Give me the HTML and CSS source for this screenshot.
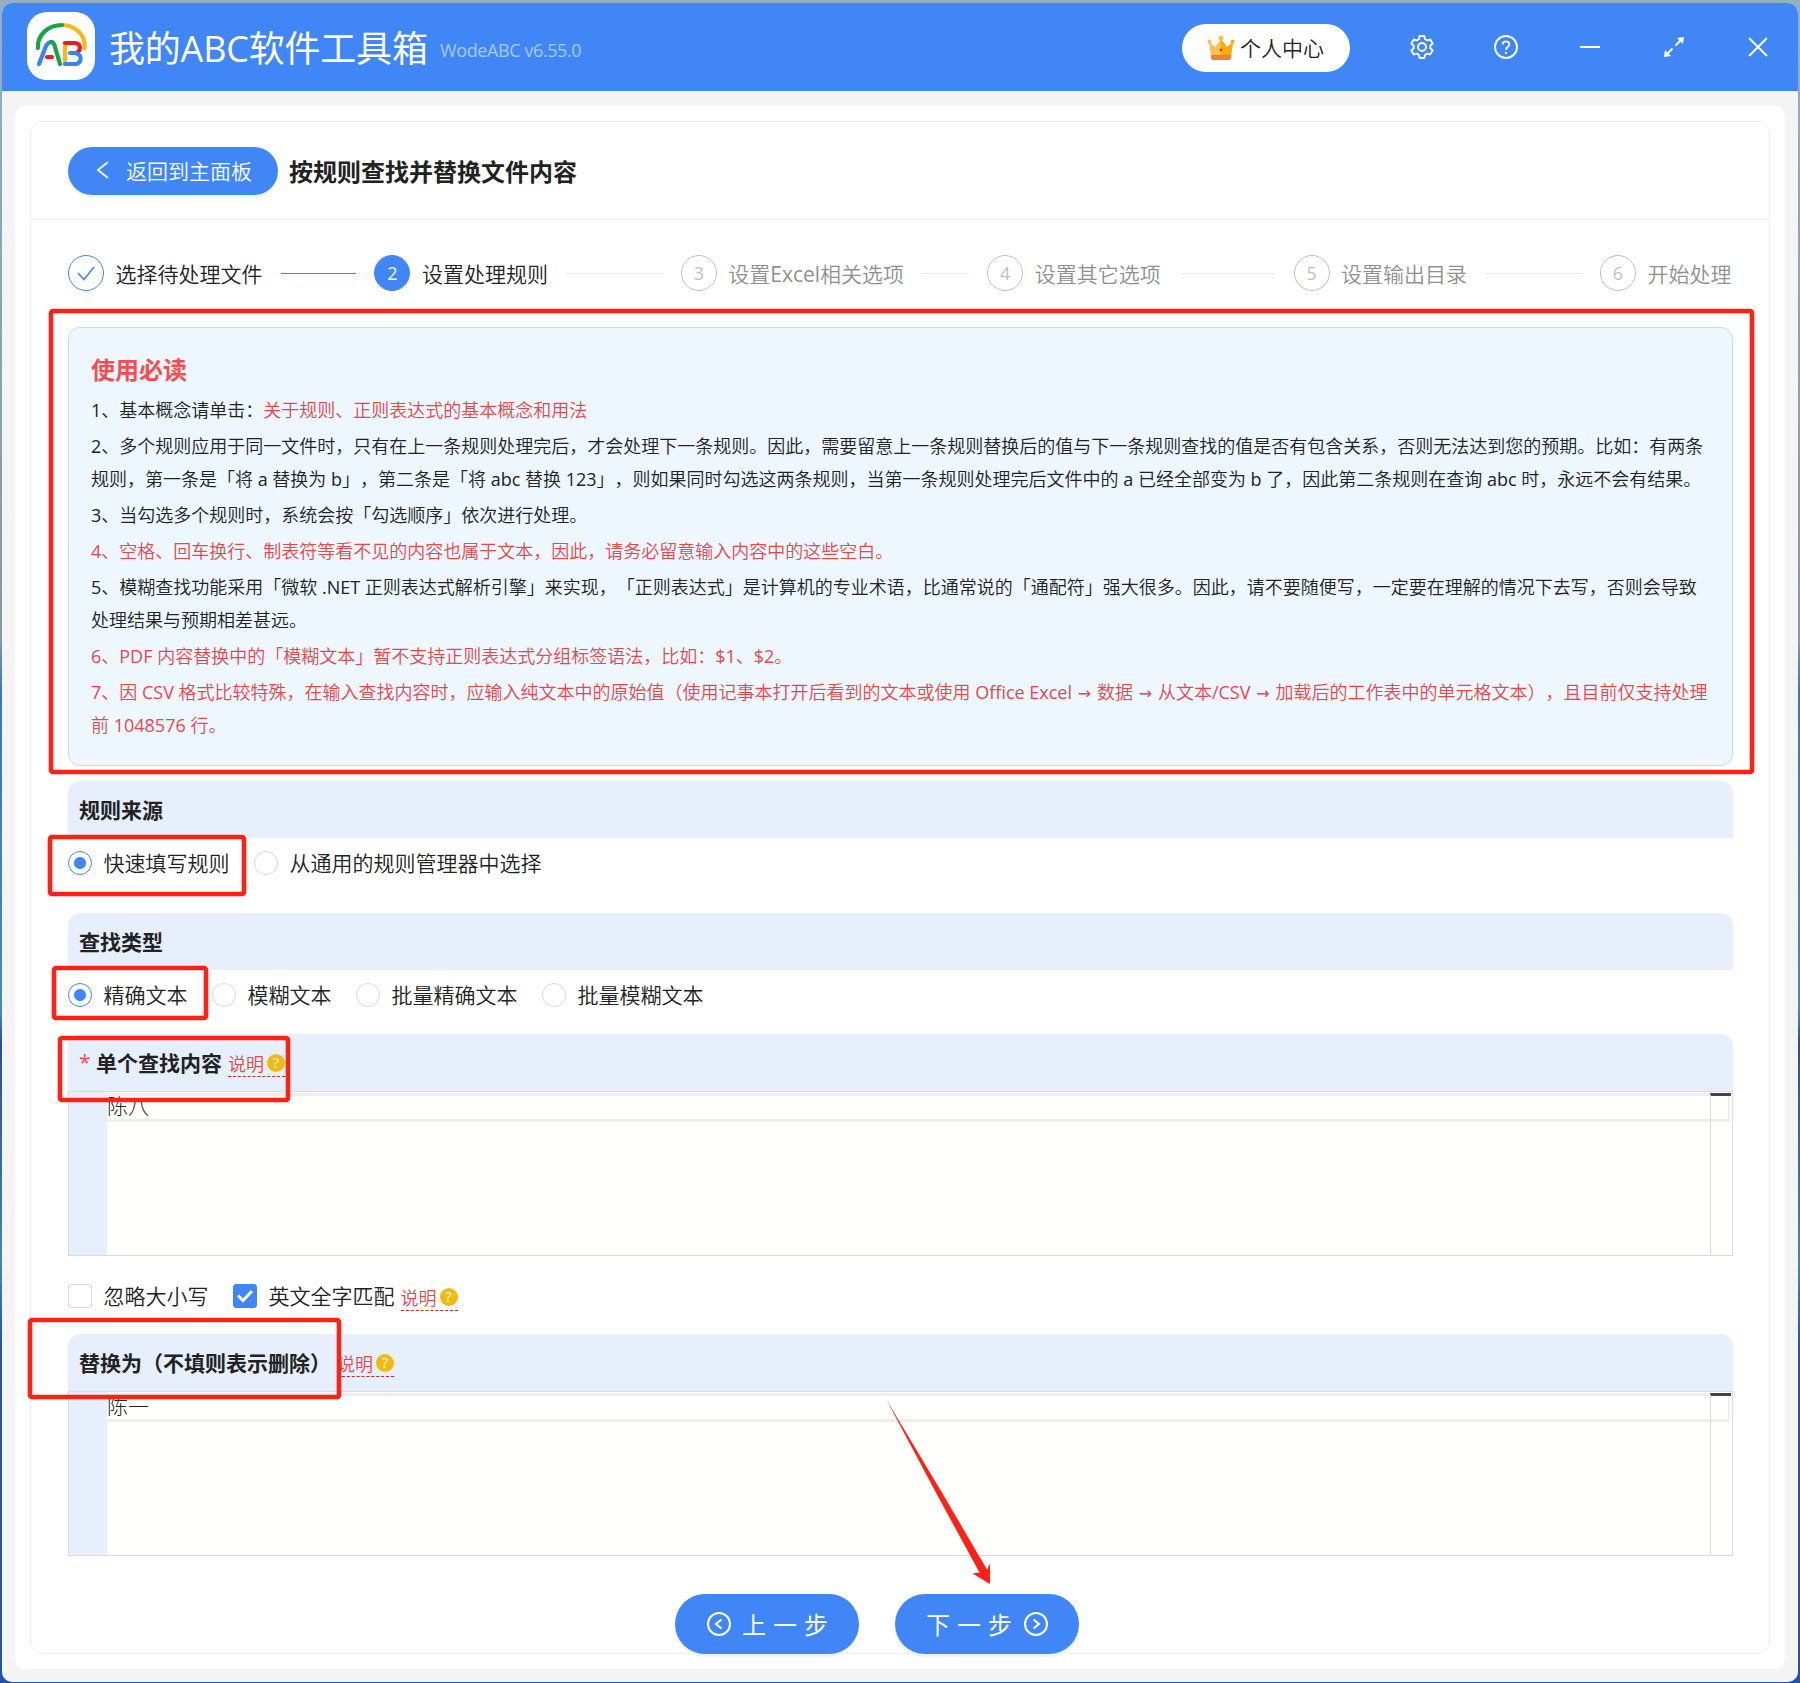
FILE: index.html
```html
<!DOCTYPE html>
<html lang="zh-CN">
<head>
    <meta charset="UTF-8">
    <meta name="viewport" content="width=device-width, initial-scale=1.0">
    <title>我的ABC软件工具箱</title>
    <link rel="stylesheet" href="styles.css">
</head>
<body>
    <div class="window">
        <header class="titlebar">
            <div class="logo">
                <svg width="68" height="68" viewBox="0 0 68 68" fill="none" stroke-width="4.2" stroke-linecap="round">
                    <path d="M57.500 36C59 23 48 13 35 13" stroke="#fbb713"/>
                    <path d="M11 36C10 23 21 13 35 13" stroke="#16a34a"/>
                    <path d="M12 52L19 34Q21 30 25 30" stroke="#3b82f6"/>
                    <path d="M24 30Q27 30 28 35L33 52" stroke="#16a34a"/>
                    <path d="M20 45H25" stroke="#ea1c1c"/>
                    <path d="M38 50V34" stroke="#fbb713"/>
                    <path d="M38 31H48C55 32 54 40 48 41" stroke="#ea1c1c"/>
                    <path d="M43 41H48C56 42 55 52 48 52H38" stroke="#3b82f6"/>
                </svg>
            </div>
            <h1>我的ABC软件工具箱</h1>
            <span class="version">WodeABC v6.55.0</span>
            <div class="window-tools">
                <button class="user-btn">
                    <svg width="28" height="28" viewBox="0 0 28 28">
                        <path d="M2 8L8 13L14 5L20 13L26 8L24 22H4Z" fill="#fcc14d"/>
                        <path d="M14 5L20 13L26 8L24 22H14Z" fill="#fdaa0c"/>
                        <path d="M4 21H24V24Q24 26 22 26H6Q4 26 4 24Z" fill="#ef7f3b"/>
                        <circle cx="14" cy="4" r="2.500" fill="#fcc14d"/>
                        <circle cx="2.500" cy="7.500" r="2" fill="#fcc14d"/>
                        <circle cx="25.500" cy="7.500" r="2" fill="#fdaa0c"/>
                        <circle cx="14" cy="16" r="1.400" fill="#c0401d"/>
                    </svg>
                    <span>个人中心</span>
                </button>
                <svg class="tool" viewBox="0 0 24 24">
                    <path d="M9.700 1H14.300L15.100 4.200L17.200 5.400L20.300 4.500L22.600 8.500L20.300 10.800V13.200L22.600 15.500L20.300 19.500L17.200 18.600L15.100 19.800L14.300 23H9.700L8.900 19.800L6.800 18.600L3.700 19.500L1.400 15.500L3.700 13.200V10.800L1.400 8.500L3.700 4.500L6.800 5.400L8.900 4.200Z"/>
                    <circle cx="12" cy="12" r="4"/>
                </svg>
                <svg class="tool" viewBox="0 0 24 24">
                    <circle cx="12" cy="12" r="11"/>
                    <path d="M8.600 9.500C8.600 5.300 15.400 5.300 15.400 9.400C15.400 11.800 12 11.800 12 14.800"/>
                    <path d="M12 17V19"/>
                </svg>
                <svg class="tool" viewBox="0 0 24 24"><path d="M2 12H22"/></svg>
                <svg class="tool" viewBox="0 0 24 24">
                    <path d="M13.500 10.500L20 4M10.500 13.500L4 20"/>
                    <path class="solid" d="M22 2L21 9L15 3ZM2 22L3 15L9 21Z"/>
                </svg>
                <svg class="tool" viewBox="0 0 24 24"><path d="M3 3L21 21M21 3L3 21"/></svg>
            </div>
        </header>

        <main class="panel">
            <div class="card">
                <div class="card-head">
                    <button class="back-btn">
                        <svg width="14" height="20" viewBox="0 0 14 20" fill="none" stroke="#fff" stroke-width="1.800"><path d="M12 2L2 10L12 18"/></svg>
                        返回到主面板
                    </button>
                    <h2>按规则查找并替换文件内容</h2>
                </div>

                <div class="card-body">
                    <ol class="steps">
                        <li class="step done">
                            <span class="step-icon">
                                <svg width="20" height="18" viewBox="0 0 20 18" fill="none" stroke="#4086f7" stroke-width="1.600"><path d="M2 9L8 15.500L18 3"/></svg>
                            </span>
                            <span>选择待处理文件</span>
                        </li>
                        <li class="step active"><span class="step-icon">2</span><span>设置处理规则</span></li>
                        <li class="step"><span class="step-icon">3</span><span>设置Excel相关选项</span></li>
                        <li class="step"><span class="step-icon">4</span><span>设置其它选项</span></li>
                        <li class="step"><span class="step-icon">5</span><span>设置输出目录</span></li>
                        <li class="step"><span class="step-icon">6</span><span>开始处理</span></li>
                    </ol>

                    <section class="notice">
                        <h3>使用必读</h3>
                        <p>1、基本概念请单击：<a>关于规则、正则表达式的基本概念和用法</a></p>
                        <p>2、多个规则应用于同一文件时，只有在上一条规则处理完后，才会处理下一条规则。因此，需要留意上一条规则替换后的值与下一条规则查找的值是否有包含关系，否则无法达到您的预期。比如：有两条<br>规则，第一条是「将 a 替换为 b」，第二条是「将 abc 替换 123」，则如果同时勾选这两条规则，当第一条规则处理完后文件中的 a 已经全部变为 b 了，因此第二条规则在查询 abc 时，永远不会有结果。</p>
                        <p>3、当勾选多个规则时，系统会按「勾选顺序」依次进行处理。</p>
                        <p class="warn">4、空格、回车换行、制表符等看不见的内容也属于文本，因此，请务必留意输入内容中的这些空白。</p>
                        <p>5、模糊查找功能采用「微软 .NET 正则表达式解析引擎」来实现，「正则表达式」是计算机的专业术语，比通常说的「通配符」强大很多。因此，请不要随便写，一定要在理解的情况下去写，否则会导致<br>处理结果与预期相差甚远。</p>
                        <p class="warn">6、PDF 内容替换中的「模糊文本」暂不支持正则表达式分组标签语法，比如：$1、$2。</p>
                        <p class="warn">7、因 CSV 格式比较特殊，在输入查找内容时，应输入纯文本中的原始值（使用记事本打开后看到的文本或使用 Office Excel <i>→</i> 数据 <i>→</i> 从文本/CSV <i>→</i> 加载后的工作表中的单元格文本），且目前仅支持处理<br>前 1048576 行。</p>
                    </section>

                    <div class="bar">规则来源</div>
                    <div class="options source">
                        <label><span class="radio checked"></span>快速填写规则</label>
                        <label><span class="radio"></span>从通用的规则管理器中选择</label>
                    </div>

                    <div class="bar">查找类型</div>
                    <div class="options type">
                        <label><span class="radio checked"></span>精确文本</label>
                        <label><span class="radio"></span>模糊文本</label>
                        <label><span class="radio"></span>批量精确文本</label>
                        <label><span class="radio"></span>批量模糊文本</label>
                    </div>

                    <div class="bar">
                        <span class="required">*</span>单个查找内容
                        <span class="help">说明<b>?</b></span>
                    </div>
                    <div class="editor">
                        <div class="gutter"></div>
                        <div class="code">
                            <div class="line">陈八</div>
                            <div class="ruler"></div>
                        </div>
                    </div>

                    <div class="options checks">
                        <label><span class="checkbox"></span>忽略大小写</label>
                        <label>
                            <span class="checkbox checked">
                                <svg width="18" height="14" viewBox="0 0 18 14" fill="none" stroke="#fff" stroke-width="3"><path d="M2 6.500L7 11.500L16 2"/></svg>
                            </span>英文全字匹配
                            <span class="help">说明<b>?</b></span>
                        </label>
                    </div>

                    <div class="bar">
                        替换为（不填则表示删除）
                        <span class="help">说明<b>?</b></span>
                    </div>
                    <div class="editor">
                        <div class="gutter"></div>
                        <div class="code">
                            <div class="line">陈一</div>
                            <div class="ruler"></div>
                        </div>
                    </div>

                    <div class="actions">
                        <button>
                            <svg width="24" height="24" viewBox="0 0 24 24" fill="none" stroke="#fff" stroke-width="2"><circle cx="12" cy="12" r="11"/><path d="M14.500 7.500L9 12L14.500 16.500"/></svg>
                            <span>上一步</span>
                        </button>
                        <button>
                            <span>下一步</span>
                            <svg width="24" height="24" viewBox="0 0 24 24" fill="none" stroke="#fff" stroke-width="2"><circle cx="12" cy="12" r="11"/><path d="M9.500 7.500L15 12L9.500 16.500"/></svg>
                        </button>
                    </div>
                </div>
            </div>
        </main>
    </div>

    <!-- red marks over the form -->
    <svg class="marks" width="1800" height="1683" viewBox="0 0 1800 1683">
        <g fill="none" stroke="#fd2116" stroke-width="4.600">
            <rect x="51" y="311" width="1701" height="461" rx="2"/>
            <rect x="50" y="837" width="194" height="57" rx="2"/>
            <rect x="54" y="968" width="152" height="50" rx="2"/>
            <rect x="60" y="1038" width="228" height="62" rx="2"/>
            <rect x="30" y="1320" width="309" height="77" rx="2"/>
        </g>
        <path d="M886 1399L942.500 1493.500L987 1569.500L990 1563.500V1584L972.500 1573.500L979.500 1572.500L938 1496.500Z" fill="#fd2116"/>
    </svg>
</body>
</html>
```
FILE: styles.css
```css
* {
    box-sizing: border-box;
}

body {
    margin: 0;
    height: 1683px;
    padding: 3px 2px 1px;
    overflow: hidden;
    background: linear-gradient(#93b0c3 0, #8298a9 38%, #3c79b5 41%, #458bb8 60%, #2c4f94 62%, #4586ad 75%, #2855a3 80%, #2855a3 100%);
    font-family: "Open Sans", "Noto Sans CJK SC DemiLight", "Noto Sans CJK SC", sans-serif;
    font-size: 21px;
    font-weight: 400;
    color: #222;
    white-space: nowrap;
    text-spacing-trim: space-all;
}

button {
    border: 0;
    padding: 0;
    font: inherit;
    color: #fff;
    background: #4086f7;
    display: flex;
    align-items: center;
}

svg {
    display: block;
    flex: none;
}

h1, h2, h3, p, ol {
    margin: 0;
    padding: 0;
}

h1, h2, h3, .bar {
    font-family: "Open Sans", "Noto Sans CJK SC", sans-serif;
}

.window {
    height: 1679px;
    background: #f4f4f4;
    border-radius: 10px;
    overflow: hidden;
}

.titlebar {
    height: 88px;
    padding-left: 25px;
    background: #4086f7;
    display: flex;
    align-items: center;
    color: #fff;
}

.logo {
    width: 68px;
    height: 68px;
    margin-top: -2px;
    background: #fff;
    border-radius: 20px;
}

h1 {
    margin-left: 14px;
    width: 331px;
    padding-top: 4px;
    font-size: 36px;
    font-weight: 400;
    letter-spacing: -0.2px;
    line-height: 60px;
}

.version {
    font-size: 18px;
    letter-spacing: -0.4px;
    color: #a9caf8;
    padding-top: 6px;
}

.window-tools {
    margin-left: auto;
    padding-right: 28px;
    display: flex;
    align-items: center;
    gap: 60px;
}

.user-btn {
    width: 168px;
    height: 48px;
    margin-top: 2px;
    border-radius: 24px;
    background: #fff;
    color: #222;
    padding-left: 25px;
    gap: 5px;
}

.user-btn span {
    padding-bottom: 2px;
}

.tool {
    width: 24px;
    height: 24px;
    fill: none;
    stroke: #fff;
    stroke-width: 1.9;
}

.tool .solid {
    fill: #fff;
    stroke: none;
}

.panel {
    margin: 15px 13px 0;
    height: 1563px;
    padding: 15px;
    background: #fff;
    border-radius: 10px;
}

.card {
    height: 1533px;
    border: 1px solid #efefef;
    border-radius: 12px;
}

.card-head {
    height: 98px;
    padding-left: 37px;
    border-bottom: 1px solid #efefef;
    display: flex;
    align-items: center;
}

.back-btn {
    width: 210px;
    height: 48px;
    padding: 0 0 1px 28px;
    gap: 16px;
    border-radius: 24px;
    box-shadow: 0 3px 0 #f0f6ff;
}

h2 {
    margin-left: 11px;
    padding-bottom: 1px;
    font-size: 24px;
    font-weight: 700;
}

.card-body {
    padding: 35px 36px 0 37px;
}

.steps {
    display: grid;
    grid-template-columns: repeat(5, 306.4px) 1fr;
    height: 36px;
    list-style: none;
}

.step {
    display: flex;
    align-items: center;
    gap: 11.5px;
    color: #8f8f8f;
}

.step:not(:last-child)::after {
    content: "";
    flex: 1;
    height: 1px;
    margin: 1px 18px 0 6.5px;
    background: #ececec;
}

.step-icon {
    flex: none;
    width: 36px;
    height: 36px;
    border: 1px solid #bfbfbf;
    border-radius: 50%;
    display: flex;
    align-items: center;
    justify-content: center;
    font-size: 18px;
    color: #bfbfbf;
}

.step.done, .step.active {
    color: #222;
}

.step.done::after {
    background: #4086f7;
}

.step.done .step-icon {
    border-color: #4086f7;
}

.step.active .step-icon {
    border-color: #4086f7;
    background: #4086f7;
    color: #fff;
}

.notice {
    margin: 36px 0 15px;
    height: 439px;
    padding: 22px 22px 0;
    background: #eef7fe;
    border: 1px solid #bcdcf3;
    border-radius: 12px;
    font-size: 18px;
    line-height: 33px;
}

.notice h3 {
    font-size: 24px;
    line-height: 40px;
    margin-bottom: 4px;
    color: #f84c50;
}

.notice p {
    margin-bottom: 3px;
}

.notice i {
    display: inline-block;
    width: 15.6px;
    text-align: center;
    font-family: "DejaVu Sans", sans-serif;
    font-size: 16px;
    font-style: normal;
    line-height: 1;
}

.notice a, .warn {
    color: #e4484d;
}

.bar {
    height: 57px;
    padding: 0 11px 2px;
    background: #e7effd;
    border-radius: 12px 12px 0 0;
    display: flex;
    align-items: center;
    font-weight: 700;
}

.required {
    width: 17px;
    color: #f84c50;
    font-weight: 400;
}

.options {
    display: flex;
    gap: 24.5px;
}

.options label {
    display: flex;
    align-items: center;
    height: 24px;
    line-height: 22px;
}

.source {
    padding: 13px 0 38px;
}

.type {
    padding: 13px 0 27px;
}

.checks {
    padding: 28px 0 26px;
}

.radio, .checkbox {
    flex: none;
    width: 24px;
    height: 24px;
    margin-right: 11.5px;
    border: 1px solid #d9d9d9;
    background: #fff;
}

.radio {
    border-radius: 50%;
}

.radio.checked {
    border-color: #4086f7;
    background: radial-gradient(circle, #4086f7 5.5px, #fff 6.5px);
}

.checkbox {
    border-radius: 3px;
    display: flex;
    align-items: center;
    justify-content: center;
}

.checkbox.checked {
    border-color: #4086f7;
    background: #4086f7;
}

.help {
    margin: 3px 0 0 6px;
    display: flex;
    align-items: center;
    gap: 3px;
    height: 27px;
    border-bottom: 1px dashed #c3282f;
    font-family: "Noto Sans CJK SC", sans-serif;
    font-size: 18px;
    font-weight: 350;
    color: #e4484d;
}

.help b {
    width: 18px;
    height: 18px;
    border-radius: 50%;
    background: #f2bb0c;
    color: #fff;
    font-family: "Open Sans", sans-serif;
    font-size: 14px;
    font-weight: 400;
    line-height: 18px;
    text-align: center;
}

.editor {
    height: 165px;
    border: 1px solid #d9dadd;
    display: flex;
}

.gutter {
    width: 38px;
    background: #e8effc;
}

.code {
    flex: 1;
    padding: 1px 2px 0 0;
    background: #fffffd;
    display: flex;
    position: relative;
}

.line {
    flex: 1;
    height: 29px;
    border: 3px solid #eee;
    border-width: 3px 2px 3px 0;
    line-height: 19px;
    font-family: "Noto Sans CJK SC", sans-serif;
    font-weight: 300;
}

/* overview ruler lies over the current line */
.ruler {
    position: absolute;
    top: 1px;
    right: 1px;
    bottom: 0;
    width: 21px;
    border-left: 1px solid #d9d9d9;
    border-top: 3px solid #444;
}

.actions {
    padding-top: 38px;
    display: flex;
    gap: 36px;
    margin-left: 607px;
}

.actions button {
    width: 184px;
    height: 60px;
    padding-left: 32px;
    gap: 10px;
    border-radius: 30px;
    box-shadow: 0 3px 0 #edf3fc;
    font-family: "Noto Sans CJK SC", sans-serif;
    font-size: 24px;
}

.actions span {
    padding-bottom: 2px;
    margin-left: 1px;
    letter-spacing: 7px;
}

.actions span:first-child {
    margin: 0 -5px 0 -1px;
}

.marks {
    position: absolute;
    top: 0;
    left: 0;
}
```
